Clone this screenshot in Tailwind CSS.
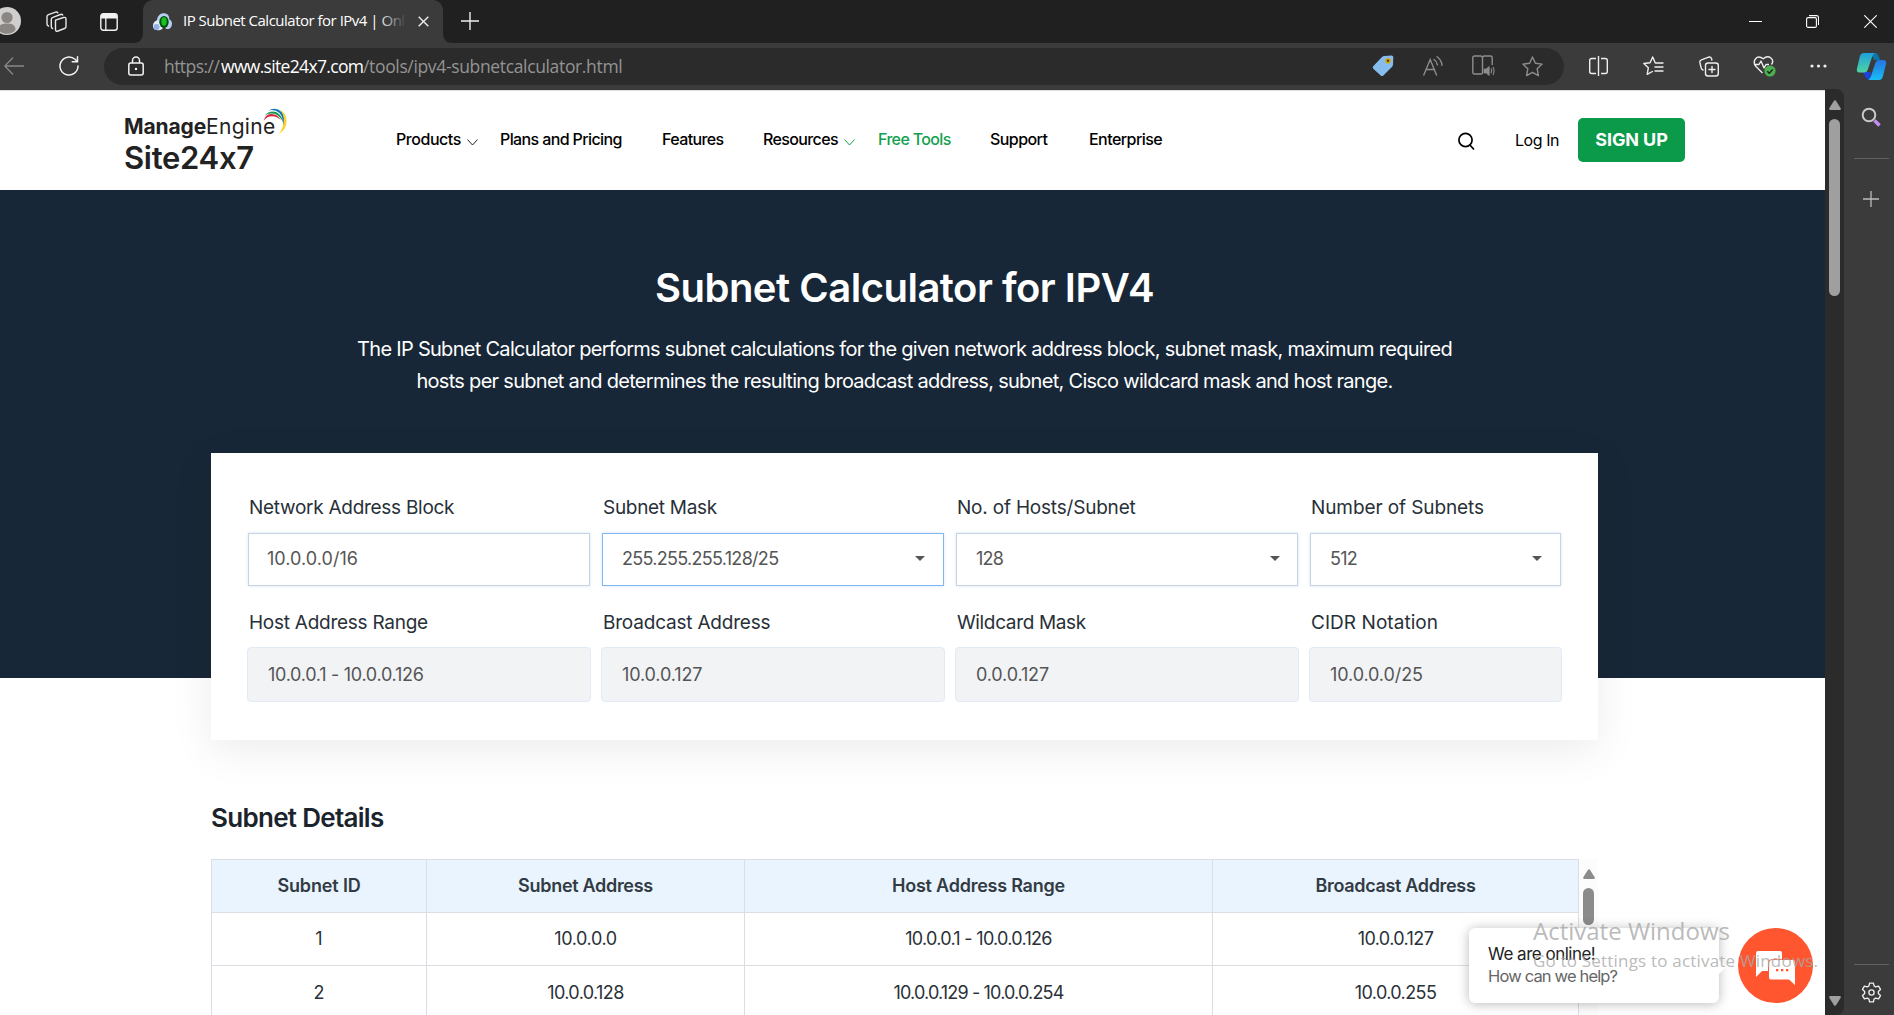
<!DOCTYPE html>
<html lang="en">
<head>
<meta charset="utf-8">
<title>IP Subnet Calculator for IPv4 | Online</title>
<script src="https://cdn.jsdelivr.net/npm/@tailwindcss/browser@4"></script>
</head>
<body class="flex h-screen flex-col overflow-hidden bg-[#3b3b3b] font-['Inter',sans-serif]">

<!-- Tab strip -->
<div class="flex h-[43px] shrink-0 items-center bg-[#202020] font-['Open_Sans',sans-serif] text-white">
  <svg class="-mt-0.5 h-7 w-[21px] shrink-0" viewBox="7 0 21 28">
    <circle cx="14" cy="14" r="14" fill="#d1cfcd"/><circle cx="14" cy="10.5" r="5.6" fill="#8a8683"/><path d="M5.5 23c0-5 3-6.500 8.500-6.500s8.500 1.500 8.500 6.500c-4 5-13 5-17 0z" fill="#8a8683"/>
  </svg>
  <svg class="ml-[25px] h-[21px] w-[21px] shrink-0" viewBox="0 0 21 21" fill="none" stroke="#e6e6e6" stroke-width="1.400" stroke-linejoin="round" stroke-linecap="round">
    <path d="M9.500 9.200l8-2.700q2.500-.7 2.500 1.500v7.500q0 1.500-1.500 2l-6.500 2.500q-2.500.8-2.500-1.500z"/><path d="M6.500 17.500q-1.200-.5-1.200-2V8.300q0-1.500 1.500-2l7.700-2.800q1.500-.5 2.200.5"/><path d="M2.500 15q-1.500-.5-1.500-2V5.700q0-1.400 1.500-2L9.500 1.200q1.500-.5 2.300.5"/>
  </svg>
  <svg class="ml-[33px] h-[18px] w-[18px] shrink-0" viewBox="0 0 18 18"><rect x=".8" y=".8" width="16.400" height="16.400" rx="2.500" fill="none" stroke="#f2f2f2" stroke-width="1.400"/><path d="M1 5.500V3q0-2 2-2h12q2 0 2 2v2.500z" fill="#f2f2f2"/><path d="M5.800 5v12" stroke="#f2f2f2" stroke-width="1.300"/></svg>
  <div class="relative ml-[25px] flex h-[43px] w-[300px] items-center rounded-t-[10px] bg-[#3b3b3b] pl-[9px]">
    <svg class="absolute bottom-0 -left-[10px] h-[10px] w-[10px]" viewBox="0 0 10 10"><path d="M10 0v10H0Q10 10 10 0z" fill="#3b3b3b"/></svg>
    <svg class="absolute -right-[10px] bottom-0 h-[10px] w-[10px]" viewBox="0 0 10 10"><path d="M0 0v10h10Q0 10 0 0z" fill="#3b3b3b"/></svg>
    <svg class="h-[19px] w-[21px]" viewBox="0 0 21 19"><path d="M5 8.500C5 3.500 9 .8 12.500 1.300s5 3.200 4.600 5.700c2.800 1.500 3.700 4.500 2.300 7.500s-3 2.500-5 2.500z" fill="#b9cdf0"/><path d="M1 15c-.5-3.500 1.500-6.500 5-7l5 8c-2 3-9 3.500-10-1z" fill="#e4edfb"/><circle cx="4.500" cy="15" r="3" fill="#93b1e4"/><ellipse cx="12" cy="10" rx="4.700" ry="6" fill="#064b12"/><ellipse cx="12" cy="9.500" rx="2.700" ry="4.200" fill="#14c31f"/></svg>
    <div class="relative -mt-0.5 ml-[10px] w-[223px] overflow-hidden text-[15px] whitespace-nowrap tracking-[-0.5px]">IP Subnet Calculator for IPv4 | Onl<div class="absolute inset-y-0 right-0 w-7 bg-linear-to-r from-transparent to-[#3b3b3b]"></div></div>
    <svg class="ml-[12px] h-[11px] w-[11px] shrink-0" viewBox="0 0 11 11" stroke="#eee" stroke-width="1.400"><path d="M.7.7l9.600 9.600M10.300.7L.7 10.300"/></svg>
  </div>
  <svg class="-mt-0.5 ml-[18px] h-[18px] w-[18px]" viewBox="0 0 18 18" stroke="#eee" stroke-width="1.400"><path d="M9 0v18M0 9h18"/></svg>
  <svg class="ml-auto h-[13px] w-[13px]" viewBox="0 0 13 13" stroke="#fff"><path d="M0 6.500h13"/></svg>
  <svg class="ml-[44px] h-[13px] w-[13px]" viewBox="0 0 13 13" fill="none" stroke="#fff" stroke-width="1.100"><rect x=".6" y="2.600" width="9.800" height="9.800" rx="1.500"/><path d="M3 .6h7.500q2 0 2 2V10"/></svg>
  <svg class="mr-[17px] ml-[45px] h-[13px] w-[13px]" viewBox="0 0 13 13" stroke="#fff" stroke-width="1.100"><path d="M.3.300l12.400 12.400M12.700.3L.3 12.700"/></svg>
</div>

<!-- Address bar -->
<div class="flex h-[46px] shrink-0 items-center bg-[#3b3b3b] font-['Open_Sans',sans-serif]">
  <svg class="ml-1 h-5 w-5" viewBox="0 0 20 20" fill="none" stroke="#888" stroke-width="1.300"><path d="M20 10H1M9 1.500L.8 10 9 18.500"/></svg>
  <svg class="ml-[35px] h-5 w-5" viewBox="0 0 20 20" fill="none" stroke="#f2f2f2" stroke-width="1.500" stroke-linecap="round"><path d="M19 10a9 9 0 1 1-3-6.700l2.300 2.200M18.500.8v5h-5.300"/></svg>
  <div class="ml-[25px] flex h-[37px] w-[1460px] items-center rounded-full bg-[#2b2b2b]">
    <svg class="ml-[24px] h-5 w-4" viewBox="0 0 16 20" fill="none" stroke="#f2f2f2" stroke-width="1.500"><rect x=".8" y="7" width="14.400" height="12" rx="2"/><path d="M4.500 7V4.500a3.500 3.500 0 0 1 7 0V7"/><circle cx="8" cy="13" r="1.200" fill="#f2f2f2" stroke="none"/></svg>
    <div class="ml-[20px] flex text-[17.500px] leading-6 whitespace-nowrap text-[#949494]"><span class="w-[57px] tracking-[-0.55px]">https://</span><span class="w-[142px] tracking-[-0.67px] text-white">www.site24x7.com</span><span class="tracking-[-0.35px]">/tools/ipv4-subnetcalculator.html</span></div>
    <svg class="ml-auto h-[22px] w-[22px]" viewBox="0 0 22 22"><path d="M1.200 11.200L10 2q1-1 2.500-1.100L19.500.5q1.800 0 1.800 1.800L21 9.500q-.1 1.500-1.100 2.500l-8.500 8.500q-1.400 1.200-2.700 0l-7.400-6.800q-1.200-1.200-.1-2.500z" fill="#86bdee"/><circle cx="16" cy="5.700" r="2.800" fill="#d9a500"/><circle cx="16" cy="5.700" r="1.200" fill="#4a3a10"/></svg>
    <svg class="ml-[29px] h-5 w-5" viewBox="0 0 20 20" fill="none" stroke="#8d8d8d" stroke-width="1.400" stroke-linecap="round"><path d="M.8 19L7.200 3.500 13.500 19M3 13.500h8.500M11 3.500a8 8 0 0 1 3.500 5.300M14 .8a12 12 0 0 1 5 8.500"/></svg>
    <svg class="ml-[29px] h-[22px] w-[23px]" viewBox="0 0 23 22" fill="none" stroke="#8d8d8d" stroke-width="1.400"><path d="M10 19H2.500Q.8 19 .8 17.300V2.700Q.8 1 2.500 1H8.500q2 0 2 2v16M10.500 3q0-2 2-2h6q1.700 0 1.700 1.700V10"/><path d="M12 14h2.200l3-2.500v9l-3-2.500H12z" fill="#8d8d8d" stroke-width=".8"/><path d="M19 13.500q1.300 2.300 0 4.800M21 12q2 4 0 8" stroke-width="1.100"/></svg>
    <svg class="mr-[21px] ml-[27px] h-[21px] w-[21px]" viewBox="0 0 21 21" fill="none" stroke="#8d8d8d" stroke-width="1.400" stroke-linejoin="round"><path d="M10.500 1l2.900 6.200 6.700.9-4.900 4.700 1.200 6.800-5.900-3.300-5.900 3.300 1.200-6.800L.9 8.100l6.700-.9z"/></svg>
  </div>
  <svg class="ml-[25px] h-5 w-[19px]" viewBox="0 0 19 20" fill="none" stroke="#eee" stroke-width="1.400"><path d="M9.500 0v20M7 2.500H2.700q-2 0-2 2v11q0 2 2 2H7M12 2.500h4.300q2 0 2 2v11q0 2-2 2H12"/></svg>
  <svg class="ml-[35px] h-[20px] w-[21px]" viewBox="0 0 21 20" fill="none" stroke="#eee" stroke-width="1.400" stroke-linejoin="round" stroke-linecap="round"><path d="M15 7H12.300L9.700 1 7 6.700l-6.200.8 4.500 4.300-1.100 6.500 5.200-2.800M12 11h8M12 15h8M14.500 7H20"/></svg>
  <svg class="ml-[35px] h-[21px] w-[20px]" viewBox="0 0 20 21" fill="none" stroke="#eee" stroke-width="1.400" stroke-linecap="round"><rect x="6.500" y="7" width="12.800" height="13" rx="2.500"/><path d="M13 10.500v6M10 13.500h6M4 14q-1.500-.3-1.800-1.800L.9 6.500Q.5 4.500 2.500 3.800L9.500 1.200q2.200-.6 3 1.300l.4 1.500"/></svg>
  <svg class="ml-[34px] h-[22px] w-[23px]" viewBox="0 0 23 22" fill="none" stroke="#eee" stroke-width="1.400" stroke-linejoin="round"><path d="M9.500 18L3 11.500C-1.500 6 4 -1 10.200 3.800 16-1 22 4.500 18.500 9.500M1.500 9.500H6l2-3.500 3 7 2-3.500h3"/><circle cx="17" cy="16" r="5.600" fill="#4caf50" stroke="none"/><path d="M14.300 16.200l2 2 3.500-3.800" stroke="#1d1d1d"/></svg>
  <svg class="ml-[34px] h-1 w-[17px]" viewBox="0 0 17 4" fill="#eee"><circle cx="2" cy="2" r="1.600"/><circle cx="8.500" cy="2" r="1.600"/><circle cx="15" cy="2" r="1.600"/></svg>
  <svg class="ml-[29px] h-[28px] w-[31px]" viewBox="0 0 31 28">
    <defs><linearGradient id="ca" x1="0" y1="0" x2="0" y2="1"><stop offset="0" stop-color="#1fa2dc"/><stop offset="1" stop-color="#4fd3a0"/></linearGradient><linearGradient id="cb" x1="0" y1="0" x2="0" y2="1"><stop offset="0" stop-color="#2573e0"/><stop offset="1" stop-color="#19bdf5"/></linearGradient></defs>
    <path d="M15 1h4q3 0 4 4l1 3h-6z" fill="#0d74a8"/><path d="M7 20h8l-1 7q-4 1-5-3z" fill="#1b44dd"/>
    <path d="M8 1h11q-2 1-3 4l-4 12q-1 3.500-4 3.500H3.500Q0 20.500 1 16.500L4 4q1-3 4-3z" fill="url(#ca)"/><path d="M23 8h4q4 0 3 4l-3 12q-1 4-4 4H12q2-1 3-4l4-12q1-4 4-4z" fill="url(#cb)"/>
  </svg>
</div>

<div class="flex min-h-0 flex-1">
  <!-- Web page -->
  <main class="relative mt-px w-[1825px] shrink-0 overflow-hidden bg-white">
    <header class="flex h-[100px] items-center border-t border-[#dedede] text-[16px] font-medium text-black">
      <div class="relative mt-[9px] ml-[124px] w-[272px] text-[#222]">
        <div class="flex text-[21px] leading-[25px]"><b class="w-[82px] font-bold tracking-[-0.1px]">Manage</b><span class="font-normal tracking-[0.3px]">Engine</span></div>
        <div class="mt-[1px] text-[31px] leading-9 font-semibold tracking-[-0.3px]">Site24x7</div>
        <svg class="absolute -top-[7px] left-[138px] h-[29px] w-[26px]" viewBox="0 0 26 29" fill="none"><path d="M2 13.500Q3 7.500 9 7t10 6q-4-3.700-9-3.800T2 13.500z" fill="#d8233f"/><path d="M2.500 8.500Q8 2.800 14 5q6 3 7.500 11Q18 8.500 12.500 6.800 7 5.500 2.500 8.500z" fill="#12994a"/><path d="M6.500 3.500Q14-.500 19.500 5q5 6 2 18Q21.500 10 17.500 6 13 2 6.500 3.500z" fill="#0b74bd"/><path d="M17 2q7 3 7.500 12T15 28q5-3 6.500-12T17 2z" fill="#fbd22b"/></svg>
      </div>
      <nav class="-mt-[3px] flex w-[1062px] items-center leading-6 whitespace-nowrap">
        <a class="flex w-[104px] items-center tracking-[-0.45px]">Products<svg class="mt-1.5 ml-[6px] h-[7px] w-[11px]" viewBox="0 0 11 7" fill="none" stroke="#222"><path d="M.5.5l5 5.500 5-5.500"/></svg></a>
        <a class="w-[162px] tracking-[-0.62px]">Plans and Pricing</a>
        <a class="w-[101px] tracking-[-0.62px]">Features</a>
        <a class="flex w-[115px] items-center tracking-[-0.62px]">Resources<svg class="mt-1.5 ml-[6px] h-[7px] w-[11px]" viewBox="0 0 11 7" fill="none" stroke="#12a050"><path d="M.5.5l5 5.500 5-5.500"/></svg></a>
        <a class="w-[112px] tracking-[-0.64px] text-[#12a050]">Free Tools</a>
        <a class="w-[99px] tracking-[-0.56px]">Support</a>
        <a class="tracking-[-0.56px]">Enterprise</a>
      </nav>
      <svg class="h-[18px] w-[17px]" viewBox="0 0 17 18" fill="none" stroke="#000" stroke-width="1.700"><circle cx="7.500" cy="8" r="6.600"/><path d="M11.500 12.500l4.500 5"/></svg>
      <a class="-mt-px ml-[40px] w-[63px] font-normal tracking-[-0.45px]">Log In</a>
      <a class="-mt-[2px] flex h-11 w-[107px] items-center justify-center rounded-[5px] bg-[#0a9a49] text-[18px] font-bold tracking-[-0.1px] whitespace-nowrap text-white">SIGN UP</a>
    </header>

    <section class="flex h-[488px] flex-col items-center bg-[#182737] pr-4 pt-[74px] text-center whitespace-nowrap text-white">
      <h1 class="text-[40px] leading-[48px] font-semibold tracking-[-0.5px]">Subnet Calculator for IPV4</h1>
      <p class="mt-[21px] text-[20px] leading-8 tracking-[-0.71px]">The IP Subnet Calculator performs subnet calculations for the given network address block, subnet mask, maximum required<br>hosts per subnet and determines the resulting broadcast address, subnet, Cisco wildcard mask and host range.</p>
    </section>

    <section class="relative -mt-[225px] ml-[211px] h-[287px] w-[1387px] bg-white px-[37px] pt-[41px] text-[19px] leading-7 whitespace-nowrap text-[#283038] shadow-[0_10px_40px_rgba(0,0,0,0.08)]">
      <div class="grid grid-cols-[342px_342px_342px_250px] gap-x-[12px] pl-px">
        <div class="tracking-[-0.28px]">Network Address Block</div><div class="tracking-[-0.3px]">Subnet Mask</div><div class="tracking-[-0.2px]">No. of Hosts/Subnet</div><div class="tracking-[-0.1px]">Number of Subnets</div>
      </div>
      <div class="mt-[11px] grid grid-cols-[342px_342px_342px_251px] gap-x-[12px] text-[18px] text-[#555] *:h-[53px] *:pb-0.5">
        <div class="flex items-center border border-[#c9d2e0] pr-[18px] pl-[18px] tracking-[0.05px] shadow-[0_0_3px_#d5e5fa]">10.0.0.0/16</div>
        <div class="flex items-center justify-between border border-[#80b6f2] pr-[18px] pl-[19px] tracking-[-0.7px] shadow-[0_0_3px_#d5e5fa]">255.255.255.128/25<svg class="h-[5px] w-[10px]" viewBox="0 0 10 5" fill="#555"><path d="M0 0h10L5 5z"/></svg></div>
        <div class="flex items-center justify-between border border-[#c9d2e0] pr-[17px] pl-[19px] tracking-[-0.8px] shadow-[0_0_3px_#d5e5fa]">128<svg class="h-[5px] w-[10px]" viewBox="0 0 10 5" fill="#555"><path d="M0 0h10L5 5z"/></svg></div>
        <div class="flex items-center justify-between border border-[#c9d2e0] pr-[18px] pl-[19px] tracking-[-0.7px] shadow-[0_0_3px_#d5e5fa]">512<svg class="h-[5px] w-[10px]" viewBox="0 0 10 5" fill="#555"><path d="M0 0h10L5 5z"/></svg></div>
      </div>
      <div class="mt-[23px] grid grid-cols-[342px_342px_342px_250px] gap-x-[12px] pl-px">
        <div class="tracking-[-0.26px]">Host Address Range</div><div class="tracking-[-0.2px]">Broadcast Address</div><div class="tracking-[-0.35px]">Wildcard Mask</div><div class="tracking-[0.05px]">CIDR Notation</div>
      </div>
      <div class="-mx-px mt-[10px] grid grid-cols-[344px_344px_344px_253px] gap-x-[10px] text-[18px] text-[#555]">
        <div class="flex h-[55px] items-center rounded-sm border border-[#e1ebf8] bg-[#f2f3f5] pl-[20px] tracking-[-0.28px]">10.0.0.1 - 10.0.0.126</div>
        <div class="flex h-[55px] items-center rounded-sm border border-[#e1ebf8] bg-[#f2f3f5] pl-[20px] tracking-[-0.12px]">10.0.0.127</div>
        <div class="flex h-[55px] items-center rounded-sm border border-[#e1ebf8] bg-[#f2f3f5] pl-[20px] tracking-[-0.14px]">0.0.0.127</div>
        <div class="flex h-[55px] items-center rounded-sm border border-[#e1ebf8] bg-[#f2f3f5] pl-[20px] tracking-[-0.1px]">10.0.0.0/25</div>
      </div>
    </section>

    <h2 class="mt-[62px] ml-[211px] text-[26px] leading-8 font-semibold tracking-[-0.7px] text-[#1b242c]">Subnet Details</h2>
    <div class="mt-[25px] ml-[211px] flex h-[400px] w-[1387px]">
      <div class="w-[1368px] border-t border-l border-[#dbdfe4] text-center text-[18px] text-[#2a3138]">
        <div class="grid grid-cols-[215px_318px_468px_366px] bg-[#e9f4fe] font-semibold text-[#323b43] *:h-[53px] *:border-r *:border-b *:border-[#dbdfe4] *:leading-[52px]">
          <div class="tracking-[-0.14px]">Subnet ID</div><div class="tracking-[-0.3px]">Subnet Address</div><div class="tracking-[-0.23px]">Host Address Range</div><div class="tracking-[-0.33px]">Broadcast Address</div>
        </div>
        <div class="grid grid-cols-[215px_318px_468px_366px] *:h-[53px] *:border-r *:border-b *:border-[#dbdfe4] *:leading-[52px]">
          <div>1</div><div class="tracking-[-0.4px]">10.0.0.0</div><div class="tracking-[-0.7px]">10.0.0.1 - 10.0.0.126</div><div class="tracking-[-0.6px]">10.0.0.127</div>
        </div>
        <div class="grid grid-cols-[215px_318px_468px_366px] *:h-[53px] *:border-r *:border-b *:border-[#dbdfe4] *:leading-[53px]">
          <div>2</div><div class="tracking-[-0.6px]">10.0.0.128</div><div class="tracking-[-0.84px]">10.0.0.129 - 10.0.0.254</div><div class="tracking-[-0.6px]">10.0.0.255</div>
        </div>
      </div>
      <div class="flex w-[19px] flex-col items-center bg-[#fcfcfc] pt-[10px]">
        <svg class="h-[10px] w-3" viewBox="0 0 12 10" fill="#8b8b8b"><path d="M5 .8q1-1.300 2 0l4.700 7.500q.6 1.700-1 1.700H1.300q-1.600 0-1-1.700z"/></svg>
        <div class="mt-[9px] h-[37px] w-[11px] rounded-full bg-[#8b8b8b]"></div>
      </div>
    </div>

    <!-- Live chat -->
    <div class="absolute top-[838px] left-[1469px] h-[75px] w-[250px] rounded-md bg-white pt-[15px] pl-[19px] text-[17px] leading-[22px] whitespace-nowrap shadow-[0_1px_12px_rgba(0,0,0,0.28)]">
      <div class="absolute top-[34px] -right-[5px] h-[10px] w-[10px] rotate-45 bg-white"></div>
      <div class="relative tracking-[-0.5px] text-[#222]">We are online!</div>
      <div class="relative text-[16.500px] tracking-[-0.84px] text-[#666]">How can we help?</div>
    </div>
    <svg class="absolute top-[838px] left-[1738px] h-[75px] w-[75px]" viewBox="0 0 75 75"><circle cx="37.500" cy="37.500" r="37.500" fill="#ff5630"/><path d="M20 23h22q2 0 2 2v7H33q-3 0-3 3v8h-6l-6 6V25q0-2 2-2z" fill="#fff"/><path d="M33 32h22q2 0 2 2v23l-6-5.500H33q-2 0-2-2V34q0-2 2-2z" fill="#fff"/><path d="M30.500 43.500V35q0-3.500 3.500-3.500h10" fill="none" stroke="#ff5630" stroke-width=".8"/><g fill="#ff5630"><rect x="38" y="41" width="2.300" height="2.300"/><rect x="43" y="41" width="2.300" height="2.300"/><rect x="48" y="41" width="2.300" height="2.300"/></g></svg>

    <!-- Activation notice -->
    <div class="absolute top-[825px] left-[1533px] font-['Open_Sans',sans-serif] whitespace-nowrap text-[#a8a8a8]/80">
      <div class="text-[24px] leading-8">Activate Windows</div>
      <div class="text-[17px] leading-[27px] tracking-[0.190px]">Go to Settings to activate Windows.</div>
    </div>
  </main>

  <!-- Page scrollbar -->
  <div class="flex w-[19px] shrink-0 flex-col items-center rounded-r-[8px] bg-[#2b2b2b] pt-[11px] pb-[9px]">
    <svg class="h-[10px] w-3" viewBox="0 0 12 10" fill="#9f9f9f"><path d="M5 .8q1-1.300 2 0l4.700 7.500q.6 1.700-1 1.700H1.300q-1.600 0-1-1.700z"/></svg>
    <div class="mt-[9px] h-[177px] w-[11px] rounded-full bg-[#9f9f9f]"></div>
    <svg class="mt-auto h-[10px] w-3 rotate-180" viewBox="0 0 12 10" fill="#9f9f9f"><path d="M5 .8q1-1.300 2 0l4.700 7.500q.6 1.700-1 1.700H1.300q-1.600 0-1-1.700z"/></svg>
  </div>

  <!-- Browser sidebar -->
  <aside class="flex flex-1 flex-col items-center pt-[18px] pl-1">
    <svg class="h-5 w-5" viewBox="0 0 20 20" fill="none"><path d="M13.500 13.500l5 5" stroke="#c38df2" stroke-width="3.600"/><circle cx="8" cy="8" r="6.300" stroke="#c9c9c9" stroke-width="2"/></svg>
    <div class="mt-[31px] h-px w-[35px] bg-[#616161]"></div>
    <svg class="mt-8 h-4 w-4" viewBox="0 0 16 16" stroke="#bdbdbd" stroke-width="1.300"><path d="M8 0v16M0 8h16"/></svg>
    <div class="mt-auto h-px w-[35px] bg-[#616161]"></div>
    <svg class="mt-[17px] mb-[12px] h-[21px] w-[21px]" viewBox="0 0 24 24" fill="none" stroke="#f0f0f0" stroke-width="1.500" stroke-linejoin="round"><circle cx="12" cy="12" r="3"/><path d="M9.800 1.200h4.400l.7 3.300 2 1.200 3.200-1 2.200 3.800-2.500 2.300v2.400l2.500 2.300-2.200 3.800-3.200-1-2 1.200-.7 3.300H9.800l-.7-3.300-2-1.200-3.200 1-2.200-3.800 2.500-2.300v-2.400L1.700 8.500l2.200-3.800 3.200 1 2-1.200z"/></svg>
  </aside>
</div>
</body>
</html>
